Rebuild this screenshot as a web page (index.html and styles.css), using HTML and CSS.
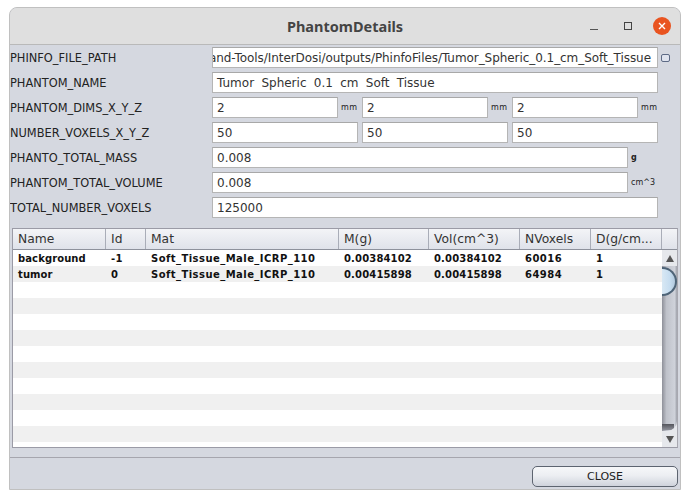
FILE: index.html
```html
<!DOCTYPE html>
<html lang="en">
  <head>
    <meta charset="UTF-8" />
    <title>PhantomDetails</title>
    <link rel="stylesheet" href="styles.css">
  </head>
  <body>
    <div class="window">
      <header class="titlebar">
        <span class="title">PhantomDetails</span>
        <div class="controls">
          <svg class="ctl" width="16" height="16" viewBox="0 0 16 16"><path d="M3 11.5h8" stroke="#555" stroke-width="1"/></svg>
          <svg class="ctl" width="16" height="16" viewBox="0 0 16 16"><rect x="4.5" y="4.5" width="7" height="7" fill="none" stroke="#444" stroke-width="1"/></svg>
          <svg class="ctl" width="18" height="18" viewBox="0 0 18 18"><circle cx="9" cy="9" r="9" fill="#e95420"/><path d="M6 6l6 6M12 6l-6 6" stroke="#fff" stroke-width="1.4"/></svg>
        </div>
      </header>

      <section class="fields">
        <div class="row">
          <label>PHINFO_FILE_PATH</label>
          <div class="input path"><span>and-Tools/InterDosi/outputs/PhinfoFiles/Tumor_Spheric_0.1_cm_Soft_Tissue</span></div>
          <span class="browse"></span>
        </div>
        <div class="row">
          <label>PHANTOM_NAME</label>
          <div class="input wide"><span>Tumor Spheric 0.1 cm Soft Tissue</span></div>
        </div>
        <div class="row">
          <label>PHANTOM_DIMS_X_Y_Z</label>
          <div class="triple">
            <div class="dim"><div class="input"><span>2</span></div><small>mm</small></div>
            <div class="dim"><div class="input"><span>2</span></div><small>mm</small></div>
            <div class="dim"><div class="input"><span>2</span></div><small>mm</small></div>
          </div>
        </div>
        <div class="row">
          <label>NUMBER_VOXELS_X_Y_Z</label>
          <div class="triple">
            <div class="input"><span>50</span></div>
            <div class="input"><span>50</span></div>
            <div class="input"><span>50</span></div>
          </div>
        </div>
        <div class="row">
          <label>PHANTO_TOTAL_MASS</label>
          <div class="input medium"><span>0.008</span></div>
          <small class="unit bold">g</small>
        </div>
        <div class="row">
          <label>PHANTOM_TOTAL_VOLUME</label>
          <div class="input medium"><span>0.008</span></div>
          <small class="unit">cm^3</small>
        </div>
        <div class="row">
          <label>TOTAL_NUMBER_VOXELS</label>
          <div class="input wide"><span>125000</span></div>
        </div>
      </section>

      <section class="table">
        <div class="thead">
          <div class="th c-name">Name</div>
          <div class="th c-id">Id</div>
          <div class="th c-mat">Mat</div>
          <div class="th c-m">M(g)</div>
          <div class="th c-vol">Vol(cm^3)</div>
          <div class="th c-vox">NVoxels</div>
          <div class="th c-d">D(g/cm...</div>
          <div class="th c-end"></div>
        </div>
        <div class="tbody">
          <div class="rows">
            <div class="tr">
              <div class="td c-name">background</div>
              <div class="td c-id">-1</div>
              <div class="td c-mat">Soft_Tissue_Male_ICRP_110</div>
              <div class="td c-m">0.00384102</div>
              <div class="td c-vol">0.00384102</div>
              <div class="td c-vox">60016</div>
              <div class="td c-d">1</div>
            </div>
            <div class="tr">
              <div class="td c-name">tumor</div>
              <div class="td c-id">0</div>
              <div class="td c-mat">Soft_Tissue_Male_ICRP_110</div>
              <div class="td c-m">0.00415898</div>
              <div class="td c-vol">0.00415898</div>
              <div class="td c-vox">64984</div>
              <div class="td c-d">1</div>
            </div>
            <div class="tr"></div><div class="tr"></div><div class="tr"></div><div class="tr"></div>
            <div class="tr"></div><div class="tr"></div><div class="tr"></div><div class="tr"></div>
            <div class="tr"></div><div class="tr"></div>
          </div>
          <div class="scrollbar">
            <div class="arrow up"></div>
            <div class="track"><div class="thumb"></div></div>
            <div class="arrow down"></div>
          </div>
        </div>
      </section>

      <footer class="footer">
        <button type="button">CLOSE</button>
      </footer>
    </div>
  </body>
</html>
```

FILE: styles.css
```css
* {
  box-sizing: border-box;
}

html,
body {
  background: #fff;
}

body {
  margin: 0;
  padding: 7px 0 0 9px;
  font-family: "DejaVu Sans", sans-serif;
  color: #222;
}

.window {
  width: 672px;
  height: 483px;
  background: #d5d8e0;
  border: 1px solid #c0c0c0;
  border-top-left-radius: 8px;
  border-top-right-radius: 8px;
  overflow: hidden;
}

.titlebar {
  display: flex;
  align-items: center;
  justify-content: center;
  height: 37px;
  background: #dfdfdf;
  border-bottom: 1px solid #b9b9b9;
  position: relative;
}

.title {
  font-family: "Noto Sans", sans-serif;
  font-size: 14.5px;
  font-weight: 700;
  color: #444;
}

.controls {
  position: absolute;
  right: 9px;
  top: 9px;
  display: flex;
  align-items: center;
  gap: 17px;
}

.row {
  display: flex;
  align-items: center;
  height: 25px;
  padding: 2px 0;
}

label {
  width: 202px;
  flex: none;
  padding-top: 1px;
  font-size: 11.4px;
  color: #222;
}

.input {
  display: flex;
  align-items: center;
  height: 21px;
  padding: 1px 4px 0;
  background: #fff;
  border: 1px solid #b5b5b5;
  border-top-color: #a8a8a8;
  font-size: 12px;
  word-spacing: 3.5px;
  color: #333;
  overflow: hidden;
  white-space: nowrap;
}

.path {
  width: 446px;
  justify-content: flex-end;
  padding-right: 6px;
  letter-spacing: -0.06px;
  word-spacing: 0;
}

.wide {
  width: 446px;
}

.medium {
  width: 416px;
}

.browse {
  width: 9px;
  height: 8px;
  margin-left: 3px;
  background: #dfe3ee;
  border: 1px solid #5d6a85;
  border-radius: 2px;
}

.triple {
  display: grid;
  grid-template-columns: repeat(3, 146px);
  gap: 4px;
}

.dim {
  display: flex;
  align-items: center;
}

.dim .input {
  width: 126px;
  flex: none;
}

small {
  font-size: 8px;
  color: #222;
}

.dim small {
  margin-left: 3px;
  letter-spacing: 0.4px;
}

.unit {
  margin-left: 3px;
}

.bold {
  font-weight: 700;
}

.table {
  width: 666px;
  height: 220px;
  margin: 8px 0 0 2px;
  background: #fff;
  border: 1px solid #9b9ba6;
  border-right-color: #a8a8b0;
}

.thead {
  display: flex;
  height: 21px;
  background: linear-gradient(#f3f4f7, #dfe2ea);
  border-bottom: 1px solid #8d919c;
}

.th {
  display: flex;
  align-items: center;
  padding-left: 5px;
  font-size: 12.3px;
  color: #333;
  border-right: 1px solid #a9adb8;
  white-space: nowrap;
}

.c-name { width: 93px; }
.c-id { width: 40px; }
.c-mat { width: 193px; }
.c-m { width: 90px; }
.c-vol { width: 91px; }
.c-vox { width: 71px; }
.c-d { width: 71px; }
.c-end { width: 15px; border-right: none; }

.tbody {
  display: flex;
  height: 197px;
}

.rows {
  width: 649px;
  flex: none;
}

.tr {
  display: flex;
  height: 16px;
}

.tr:nth-child(even) {
  background: #f0f0f0;
}

.td {
  display: flex;
  align-items: center;
  padding: 1px 0 0 5px;
  font-size: 10px;
  font-weight: 700;
  letter-spacing: 0.45px;
  color: #111;
  white-space: nowrap;
}

.td.c-name {
  letter-spacing: 0.1px;
}

.td.c-m,
.td.c-vol {
  letter-spacing: 0.15px;
}

.scrollbar {
  flex: 1;
  display: flex;
  flex-direction: column;
  background: #e6e8ec;
}

.arrow {
  height: 16px;
  flex: none;
  display: flex;
  align-items: center;
  justify-content: center;
}

.arrow::before {
  content: "";
  border-left: 4px solid transparent;
  border-right: 4px solid transparent;
}

.up::before {
  border-bottom: 7px solid #555;
}

.down::before {
  border-top: 7px solid #555;
}

.track {
  flex: 1;
  overflow: hidden;
  background: linear-gradient(90deg, #8e9099, #bfc2ca 30%, #cfd2da 85%, #9ea1aa);
  border-bottom-right-radius: 10px;
  padding-top: 1px;
}

.track::after {
  content: "";
  display: block;
  height: 6px;
  margin-top: 128px;
  width: 12px;
  background: linear-gradient(#54555c, #8e9099);
}

.thumb {
  width: 15px;
  height: 29px;
  background: linear-gradient(90deg, #d8e8f4, #c6ddf0 60%, #b2c9de);
  border: 2px solid #4e6478;
  border-left: none;
  border-radius: 0 15px 15px 0;
}

.footer {
  display: flex;
  justify-content: flex-end;
  height: 32px;
  margin-top: 9px;
  padding: 8px 2px 0 0;
  border-top: 1px solid #a6a6ae;
}

button {
  width: 146px;
  height: 21px;
  padding: 0;
  font-family: inherit;
  font-size: 11px;
  color: #222;
  background: linear-gradient(#f6f7f9, #eceef2 45%, #cfd3dc);
  border: 1px solid #5d6470;
  border-radius: 5px;
}
```
